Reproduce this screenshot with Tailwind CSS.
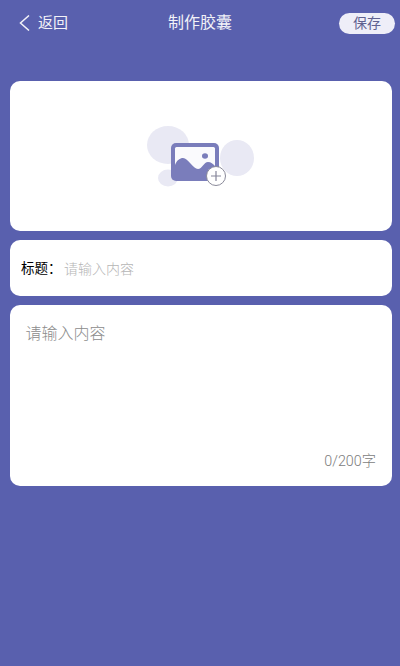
<!DOCTYPE html>
<html lang="zh">
<head>
    <meta charset="UTF-8">
    <meta name="viewport" content="width=device-width, initial-scale=1.0">
    <title>制作胶囊</title>
    <script src="https://cdn.jsdelivr.net/npm/@tailwindcss/browser@4"></script>
</head>
<body class="h-[666px] overflow-hidden bg-[#5960ae] font-['Roboto','Noto_Sans_CJK_SC',sans-serif]">
    <!-- Header -->
    <header class="h-[46px] flex items-center justify-between pl-[19px] pr-[5px]">
        <div class="flex items-center gap-[8px] w-[86px] text-[#f2f2f8]">
            <svg width="11" height="16" viewBox="0 0 11 16" fill="none" stroke="#f2f2f8" stroke-width="1.5">
                <path d="M10 0.5 L1.5 8 L10 15.5"/>
            </svg>
            <span class="text-[15px] leading-none">返回</span>
        </div>
        <h1 class="text-[16px] leading-none text-[#f2f2f8]">制作胶囊</h1>
        <div class="w-[100px] flex justify-end">
            <button class="w-[56px] h-[21px] rounded-full bg-[#eeeef8] text-[14px] leading-none text-[#5f6190]">保存</button>
        </div>
    </header>

    <main class="pt-[35px] px-[10px] flex flex-col gap-[9px] w-[382px] box-content">
        <!-- Image picker -->
        <section class="h-[150px] rounded-[10px] bg-white flex items-center justify-center">
            <svg width="110" height="64" viewBox="0 0 110 64" class="mr-[2px]">
                <ellipse cx="23" cy="21" rx="21" ry="19" fill="#e9e9f4"/>
                <ellipse cx="92" cy="34" rx="17" ry="18" fill="#e9e9f4"/>
                <ellipse cx="23" cy="54" rx="10" ry="8.5" fill="#e9e9f4"/>
                <rect x="26" y="19" width="48" height="38" rx="5" fill="#7a7dbb"/>
                <rect x="30" y="23" width="40" height="30" rx="1.5" fill="#fafafd"/>
                <ellipse cx="60" cy="32" rx="3" ry="2.8" fill="#7a7dbb"/>
                <path d="M30 41 C32 36 35 34 38 34 C43 34 48 45 53 45 C57 45 59 38 63 38 C66 38 68 40 70 42 V53 H30 Z" fill="#7a7dbb"/>
                <circle cx="71" cy="52" r="9.5" fill="#fff" stroke="#8a8a9a" stroke-width="1"/>
                <path d="M66 52 H76 M71 47 V57" stroke="#85859a" stroke-width="1.2" fill="none"/>
            </svg>
        </section>

        <!-- Title -->
        <section class="h-[56px] rounded-[10px] bg-white flex items-center pl-[11px] pt-[1px]">
            <span class="text-[13.5px] leading-none text-black w-[43px]">标题：</span>
            <span class="text-[14px] leading-none font-light text-[#b5b5b5]">请输入内容</span>
        </section>

        <!-- Content -->
        <section class="h-[181px] rounded-[10px] bg-white flex flex-col justify-between pt-[21px] pb-[18px] pl-[15.5px] pr-[16px]">
            <p class="text-[16px] leading-none font-light text-[#8c8c8c]">请输入内容</p>
            <p class="text-right text-[14.3px] leading-none font-light text-[#7c7c7c]">0/200字</p>
        </section>
    </main>
</body>
</html>
